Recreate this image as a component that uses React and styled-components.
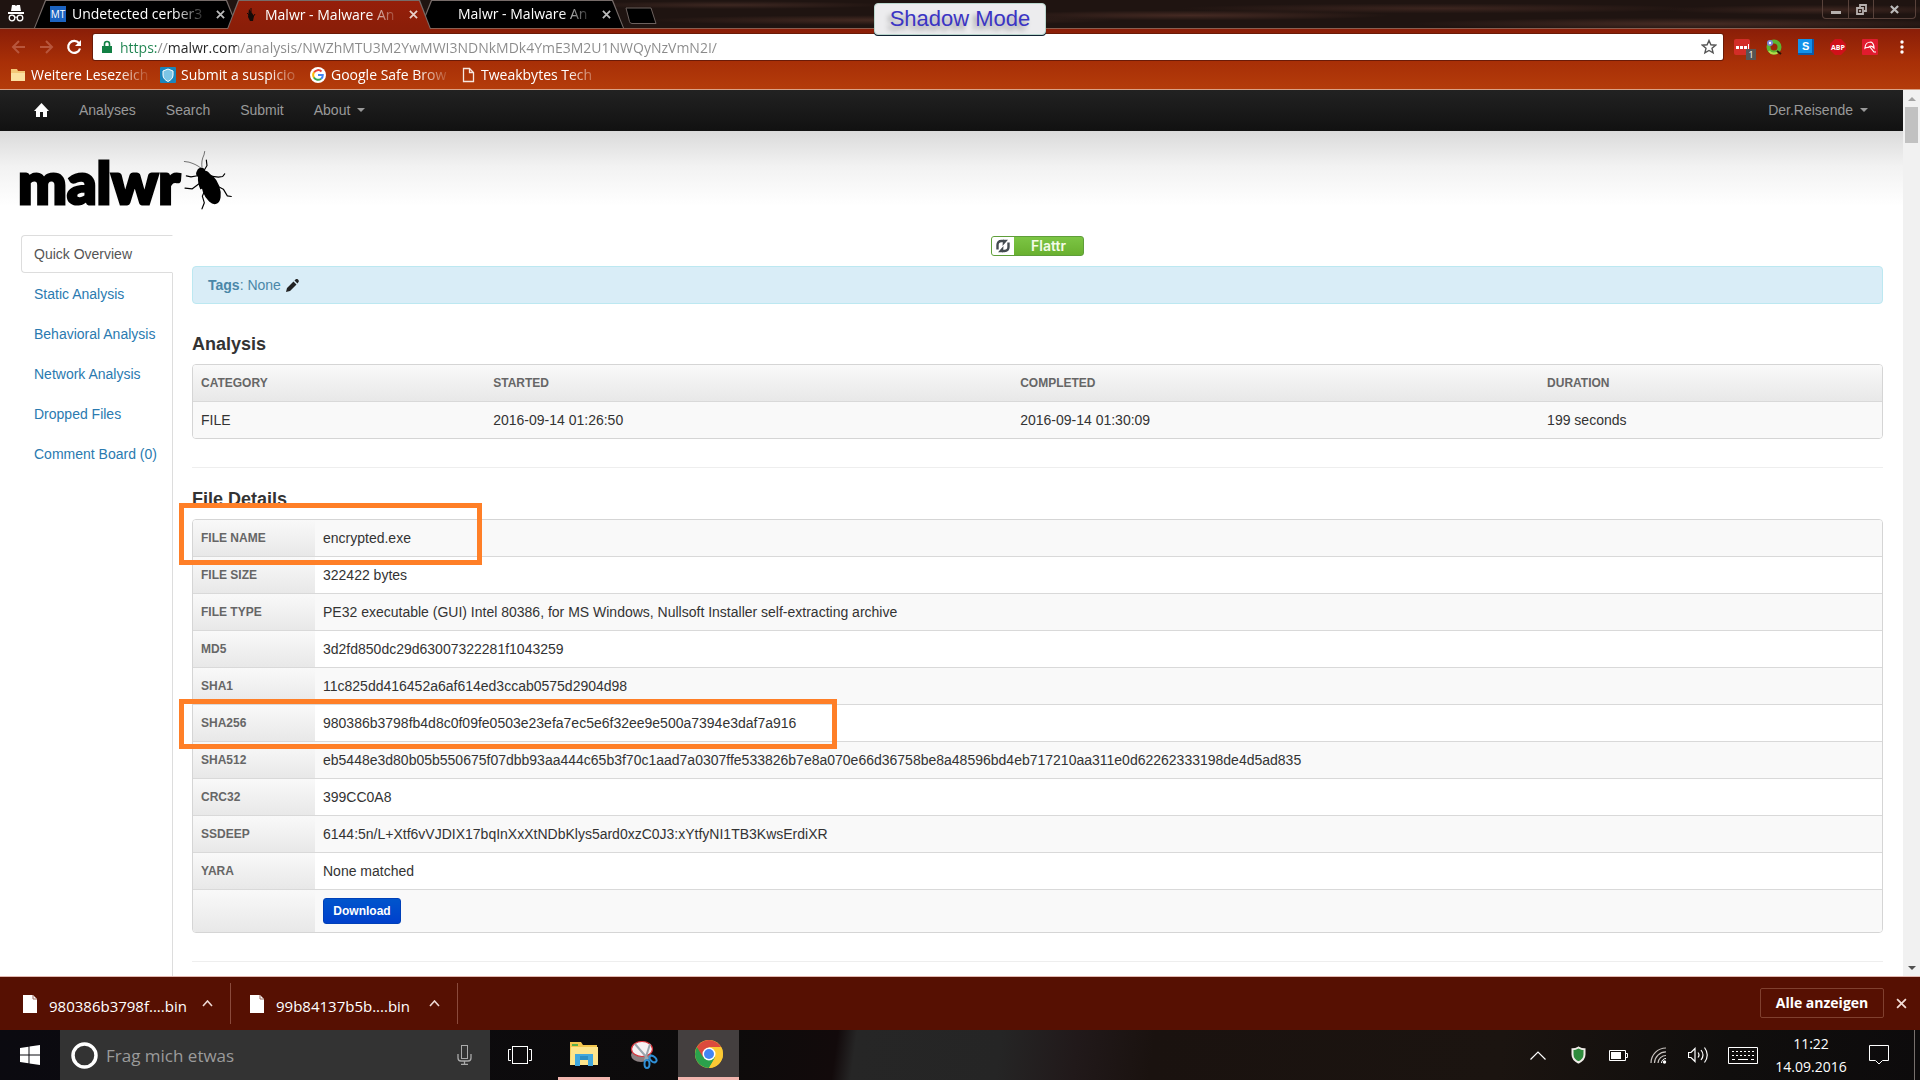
import React from "react";
import styled, { createGlobalStyle, css } from "styled-components";

const uiFont = `"Segoe UI", "Open Sans", "Noto Sans", sans-serif`;
const pageFont = `"Helvetica Neue", Arial, "Liberation Sans", sans-serif`;

const Global = createGlobalStyle`
  *, *::before, *::after { box-sizing: border-box; }
  html, body { margin: 0; height: 100%; overflow: hidden; }
  #root { height: 100%; }
  button, input { font: inherit; }
  a { text-decoration: none; }
`;

const Screen = styled.div`
  height: 100vh;
  display: flex;
  flex-direction: column;
  overflow: hidden;
  font-family: ${uiFont};
  font-size: 14px;
`;

const IconButton = styled.button`
  display: inline-flex;
  align-items: center;
  justify-content: center;
  flex: none;
  width: ${(p) => p.$w || 16}px;
  height: ${(p) => p.$h || 20}px;
  margin-left: ${(p) => p.$ml || 0}px;
  padding: 0;
  border: 0;
  background: none;
  color: ${(p) => p.$color || "#fff"};
  svg { display: block; flex: none; }
`;

/* ---------- window title bar ---------- */

const TitleBar = styled.header`
  position: relative;
  z-index: 1;
  flex: none;
  height: 29px;
  display: flex;
  border-bottom: 1px solid #8c5f50;
  background:
    radial-gradient(ellipse 160px 4px at 38% 18%, #3d2721 0, transparent 100%),
    radial-gradient(ellipse 240px 5px at 46% 72%, #442a22 0, transparent 100%),
    radial-gradient(ellipse 200px 5px at 62% 55%, #452a23 0, transparent 100%),
    radial-gradient(ellipse 260px 5px at 75% 30%, #3c251f 0, transparent 100%),
    radial-gradient(ellipse 280px 6px at 88% 85%, #472c24 0, transparent 100%),
    radial-gradient(ellipse 160px 5px at 95% 35%, #3d2620 0, transparent 100%),
    #1f1411;
`;

const Incognito = styled.div`
  width: 34px;
  padding: 4px 0 0 8px;
`;

const TabStrip = styled.div`
  display: flex;
  height: 29px;
`;

const slant = "polygon(11px 0, calc(100% - 11px) 0, 100% 100%, 0 100%)";

const Tab = styled.button`
  position: relative;
  z-index: ${(p) => (p.$active ? 2 : 1)};
  display: flex;
  align-items: center;
  width: 204px;
  height: ${(p) => (p.$active ? 29 : 28)}px;
  margin-right: -11px;
  padding: 0 0 0 16px;
  border: 0;
  background: #776c69;
  clip-path: ${slant};
  color: #fff;
  text-align: left;
  &::before {
    content: "";
    position: absolute;
    inset: 1px 1px 0;
    background: ${(p) => (p.$active ? "linear-gradient(#951f0a, #8a1e08)" : "#000")};
    clip-path: ${slant};
  }
`;

const Favicon = styled.span`
  position: relative;
  display: flex;
  flex: none;
  width: 22px;
  height: 20px;
  align-items: center;
`;

const MtBadge = styled.span`
  width: 16px;
  height: 16px;
  background: #1b63c0;
  font-size: 10px;
  line-height: 16px;
  text-align: center;
`;

const fade = css`
  overflow: hidden;
  white-space: nowrap;
  mask-image: linear-gradient(to right, #000 calc(100% - 34px), transparent);
`;

const TabTitle = styled.span`
  position: relative;
  width: 136px;
  line-height: 20px;
  ${fade}
`;

const TabClose = styled.span`
  position: relative;
  width: 14px;
  height: 20px;
  margin-left: 8px;
  display: flex;
  align-items: center;
`;

const NewTab = styled.button`
  width: 32px;
  height: 18px;
  margin: 7px 0 0 12px;
  padding: 0;
  border: 0;
  background: none;
  svg { display: block; }
`;

const WindowControls = styled.div`
  display: flex;
  height: 19px;
  margin: 0 4px 0 auto;
  border: 1px solid #58423b;
  border-top: 0;
  border-radius: 0 0 4px 4px;
`;

const WindowButton = styled.button`
  width: ${(p) => p.$w}px;
  padding: 0;
  border: 0;
  border-left: ${(p) => (p.$first ? "0" : "1px solid #58423b")};
  background: none;
  color: #b5b0ae;
  display: flex;
  align-items: center;
  justify-content: center;
`;

const ShadowBadge = styled.div`
  position: absolute;
  z-index: 3;
  left: 50%;
  top: 3px;
  width: 172px;
  height: 32px;
  transform: translateX(-50%);
  border: 1px solid #b9d6cd;
  border-radius: 4px;
  background: #ececee;
  box-shadow: 0 1px 0 #123;
  color: #3b35c4;
  font-family: ${pageFont};
  font-size: 22px;
  line-height: 30px;
  text-align: center;
  text-shadow: -3px 4px 5px #999;
`;

/* ---------- toolbar and bookmarks ---------- */

const Chrome = styled.div`
  flex: none;
  display: flex;
  flex-direction: column;
  height: 61px;
  padding-top: 5px;
  border-bottom: 1px solid #d9a287;
  background: linear-gradient(#8a1e08, #a82f07 55%, #b43c0a);
`;

const Toolbar = styled.div`
  display: flex;
  align-items: center;
  height: 26px;
  padding: 0 10px;
`;

const NavButtons = styled.div`
  display: flex;
  width: 83px;
  gap: 12px;
`;

const Omnibox = styled.label`
  flex: 1;
  display: flex;
  align-items: center;
  height: 26px;
  padding: 0 6px 0 9px;
  border-radius: 2px;
  background: #fff;
  box-shadow: 0 0 0 1px #6b1b08;
`;

const UrlInput = styled.input`
  flex: 1;
  height: 24px;
  margin-left: 8px;
  padding: 0;
  border: 0;
  outline: 0;
  background: linear-gradient(to right, #1e8450 0 37px, #888 37px 47px, #222 47px 117px, #8a8a8a 117px);
  background-clip: text;
  color: transparent;
`;

const Extensions = styled.div`
  display: flex;
  gap: 16px;
  margin-left: 11px;
`;

const Extension = styled(IconButton)`
  position: relative;
`;

const Counter = styled.span`
  position: absolute;
  left: 12px;
  top: 12px;
  width: 10px;
  height: 11px;
  background: #555;
  color: #fff;
  font-size: 9px;
  line-height: 11px;
`;

const Bookmarks = styled.nav`
  display: flex;
  align-items: center;
  height: 29px;
  padding-left: 10px;
  gap: 8px;
`;

const Bookmark = styled.a`
  display: flex;
  align-items: center;
  width: 142px;
  gap: 5px;
  color: #fff;
  line-height: 20px;
  svg { flex: none; }
  span { flex: 1; ${fade} }
`;

/* ---------- page ---------- */

const Viewport = styled.div`
  flex: 1;
  min-height: 0;
  display: flex;
  background: #fff;
  font-family: ${pageFont};
  font-size: 14px;
  line-height: 20px;
  color: #333;
`;

const Page = styled.div`
  flex: 1;
  min-width: 0;
  display: flex;
  flex-direction: column;
`;

const NavBar = styled.nav`
  flex: none;
  display: flex;
  align-items: center;
  height: 41px;
  padding: 0 35px 2px 34px;
  background: linear-gradient(#222, #111);
  gap: 30px;
`;

const NavLink = styled.a`
  display: flex;
  align-items: center;
  color: #999;
  margin-left: ${(p) => (p.$right ? "auto" : 0)};
`;

const Caret = styled.span`
  margin-left: 7px;
  border: 4px solid transparent;
  border-top-color: #999;
  border-bottom: 0;
`;

const Body = styled.div`
  flex: 1;
  min-height: 0;
  overflow: hidden;
  display: flex;
  flex-direction: column;
  background: linear-gradient(#dadada, #f2f2f2 35px, #fff 75px);
`;

const Logo = styled.h1`
  flex: none;
  display: flex;
  height: 104px;
  margin: 0;
  padding: 19px 0 0 18px;
  color: #000;
  font-family: Lato, "Open Sans", sans-serif;
  font-size: 58px;
  font-weight: 900;
  line-height: 64px;
  -webkit-text-stroke: 3px #000;
  svg { margin-left: 3px; }
`;

const Columns = styled.div`
  flex: 1;
  min-height: 0;
  display: flex;
  padding: 0 20px 0 21px;
  gap: 19px;
`;

const SideNav = styled.nav`
  flex: none;
  width: 152px;
  display: flex;
  flex-direction: column;
  gap: 2px;
  border-right: 1px solid #ddd;
`;

const SideLink = styled.a`
  padding: 8px 12px;
  border: 1px solid transparent;
  color: #2a7ab0;
  white-space: nowrap;
  ${(p) => p.$active && css`
    margin-right: -1px;
    border-color: #ddd;
    border-right-color: #fff;
    border-radius: 4px 0 0 4px;
    background: #fff;
    color: #555;
  `}
`;

const Content = styled.main`
  flex: 1;
  min-width: 0;
`;

const FlattrRow = styled.div`
  display: flex;
  justify-content: center;
  height: 31px;
  padding-top: 1px;
`;

const Flattr = styled.button`
  display: flex;
  width: 93px;
  height: 20px;
  padding: 0;
  border: 1px solid #5f9e3a;
  border-radius: 3px;
  overflow: hidden;
  background: linear-gradient(#7cc544, #69b02f);
  color: #f4fbe8;
  font-family: Inter, sans-serif;
  font-size: 14px;
  font-weight: 600;
  line-height: 18px;
  svg { display: block; background: #fff; }
  span { flex: 1; }
`;

const TagsBox = styled.div`
  display: flex;
  align-items: center;
  padding: 8px 15px;
  border: 1px solid #bce8f1;
  border-radius: 4px;
  background: #d9edf7;
  color: #4a87a8;
  svg { margin-left: 5px; }
`;

const Section = styled.section`
  position: relative;
  padding: ${(p) => p.$top}px 0 28px;
  border-bottom: 1px solid #eee;
`;

const Heading = styled.h4`
  margin: 0 0 10px;
  font-size: 18px;
  line-height: 20px;
  font-weight: bold;
`;

const Table = styled.table`
  width: 100%;
  border: 1px solid #d5d5d5;
  border-radius: 4px;
  border-collapse: separate;
  border-spacing: 0;
  overflow: hidden;
  th, td {
    padding: 8px;
    line-height: 20px;
    text-align: left;
    border-top: 1px solid #d9d9d9;
  }
  tr:first-child > th, thead td { border-top: 0; }
  tbody tr:nth-child(odd) td { background: #f9f9f9; }
`;

const DetailTable = styled(Table)`
  tbody tr:first-child td { border-top: 0; }
`;

const Th = styled.th`
  width: ${(p) => p.$w};
  height: 36px;
  background: linear-gradient(#f9f9f9, #e8e8e8);
  color: #666;
  font-size: 12px;
  text-transform: uppercase;
`;

const Download = styled.button`
  display: block;
  width: 78px;
  height: 26px;
  padding: 0;
  border: 1px solid #0040b8;
  border-radius: 3px;
  background: linear-gradient(#0055cc, #0040cc);
  color: #fff;
  font-size: 12px;
  font-weight: bold;
`;

/* highlight frames drawn over the table */
const Marker = styled.div`
  position: absolute;
  left: -13px;
  top: ${(p) => p.$top}px;
  width: ${(p) => p.$w}px;
  height: ${(p) => p.$h}px;
  border: 5px solid #ff7f27;
  pointer-events: none;
`;

const Scrollbar = styled.div`
  flex: none;
  width: 17px;
  display: flex;
  flex-direction: column;
  align-items: center;
  background: #f1f1f1;
`;

const Arrow = styled.span`
  height: 17px;
  display: flex;
  align-items: center;
  &::before {
    content: "";
    border: 4px solid transparent;
    ${(p) => (p.$down ? "border-top-color: #505050; border-bottom: 0;" : "border-bottom-color: #a3a3a3; border-top: 0;")}
  }
`;

const Thumb = styled.div`
  width: 13px;
  height: 36px;
  margin-bottom: auto;
  background: #c1c1c1;
`;

/* ---------- download shelf ---------- */

const Shelf = styled.footer`
  flex: none;
  display: flex;
  align-items: center;
  height: 54px;
  padding-right: 11px;
  border-top: 1px solid #e3b9b2;
  background: #561002;
  color: #fff;
`;

const ShelfItem = styled.button`
  display: flex;
  align-items: center;
  width: ${(p) => p.$w}px;
  height: 41px;
  padding: 0 17px 0 ${(p) => p.$pad}px;
  border: 0;
  border-right: 1px solid #8a4a3c;
  background: none;
  color: #fff;
  font-size: 15px;
  line-height: 20px;
  text-align: left;
  svg { flex: none; }
  span { flex: 1; margin: 4px 0 0 12px; white-space: nowrap; }
`;

const ShowAll = styled.button`
  width: 124px;
  height: 30px;
  margin: 0 9px 2px auto;
  padding: 0;
  border: 1px solid #80402f;
  border-radius: 2px;
  background: none;
  color: #fff;
  font-size: 14px;
  font-weight: 700;
`;

/* ---------- taskbar ---------- */

const Taskbar = styled.footer`
  flex: none;
  display: flex;
  height: 50px;
  background: linear-gradient(98deg, #0b0a10 0, #0d0b0b 38%, #120a0b 43.5%, #262626 44.500%, #252525 52%, #21191a 56%, #1a120f 60%, #1b1410 78%, #100e0d 90%, #0d0b0c);
  color: #fff;
`;

const TaskButton = styled.button`
  display: flex;
  align-items: center;
  justify-content: center;
  width: ${(p) => p.$w}px;
  padding: 0;
  border: 0;
  border-bottom: ${(p) => (p.$running ? "3px solid #f1b5ae" : "0")};
  margin: ${(p) => p.$m || "0"};
  background: ${(p) => (p.$current ? "#443f3f" : "none")};
`;

const SearchBox = styled.label`
  display: flex;
  align-items: center;
  width: 430px;
  padding: 0 18px 0 11px;
  background: #333;
`;

const SearchInput = styled.input`
  flex: 1;
  margin: 0 8px;
  padding: 0;
  border: 0;
  outline: 0;
  background: none;
  font-size: 17px;
  &::placeholder { color: #9b9b9b; opacity: 1; }
`;

const Tray = styled.div`
  display: flex;
  align-items: center;
  margin-left: auto;
  padding-right: 5px;
`;

const Clock = styled.time`
  width: 76px;
  margin: 0 20px 0 5px;
  font-size: 14px;
  line-height: 23px;
  text-align: center;
`;

const ShowDesktop = styled.span`
  align-self: stretch;
  width: 1px;
  margin-left: 25px;
  background: #77706d;
`;

/* ---------- icons ---------- */

const Svg = ({ w, h, box, children }) => (
  <svg width={w} height={h} viewBox={box || `0 0 ${w} ${h}`} fill="none" aria-hidden="true">{children}</svg>
);

const Cross = ({ size = 9, color = "#bbb", width = 2 }) => (
  <Svg w={size} h={size} box="0 0 10 10"><path d="M1 1l8 8M9 1l-8 8" stroke={color} strokeWidth={width} /></Svg>
);

const Beetle = () => (
  <Svg w={50} h={61} box="540 58 150 182">
    <ellipse cx="624" cy="174" rx="26" ry="48" transform="rotate(-20 624 174)" fill="#000" />
    <path d="M584 116c4-6 13-7 19-3l4 7c8 1 14 8 17 14l12 20-44 22c-6-14-8-26-7-38-5-3-7-9-5-14z" fill="#000" />
    <g stroke="#000" strokeWidth="3.500" strokeLinecap="round" strokeLinejoin="round">
      <path d="M594 112c-12-10-24-14-36-18l-14-2M597 110c-2-14 0-26 6-38l2-10" strokeWidth="1.600" />
      <path d="M605 116l7-12-2-16M588 134l-24 4-14-3M592 156l-24 18-22-2M622 136l24 3 13-2 6-8M644 166l17 9 12 20 12 2M604 182l-6 14 6 20-7 18" />
    </g>
  </Svg>
);

const ChromeLogo = () => (
  <Svg w={28} h={28} box="0 0 28 28">
    <circle cx="14" cy="14" r="14" fill="#fcc934" />
    <path d="M14 14L1.9 7A14 14 0 0014 28l6-10.500z" fill="#2ba24c" />
    <path d="M14 7h12.100A14 14 0 0114 28l6-10z" fill="#fcc934" />
    <path d="M1.900 7A14 14 0 0126.100 7H14l-6 10z" fill="#dc4a3d" />
    <circle cx="14" cy="14" r="6.500" fill="#fff" />
    <circle cx="14" cy="14" r="5" fill="#4285f4" />
  </Svg>
);

const FileIcon = () => (
  <Svg w={14} h={18}><path d="M0 0h10l4 4v14H0z" fill="#fff" /><path d="M10 0v4h4" stroke="#9a6b60" /></Svg>
);

const ShelfCaret = () => (
  <Svg w={11} h={7}><path d="M1 6l4.500-5L10 6" stroke="#eed9d4" strokeWidth="1.600" /></Svg>
);

/* ---------- data ---------- */

const sideLinks = ["Quick Overview", "Static Analysis", "Behavioral Analysis", "Network Analysis", "Dropped Files", "Comment Board (0)"];

const details = [
  ["File name", "encrypted.exe"],
  ["File size", "322422 bytes"],
  ["File type", "PE32 executable (GUI) Intel 80386, for MS Windows, Nullsoft Installer self-extracting archive"],
  ["MD5", "3d2fd850dc29d63007322281f1043259"],
  ["SHA1", "11c825dd416452a6af614ed3ccab0575d2904d98"],
  ["SHA256", "980386b3798fb4d8c0f09fe0503e23efa7ec5e6f32ee9e500a7394e3daf7a916"],
  ["SHA512", "eb5448e3d80b05b550675f07dbb93aa444c65b3f70c1aad7a0307ffe533826b7e8a070e66d36758be8a48596bd4eb717210aa311e0d62262333198de4d5ad835"],
  ["CRC32", "399CC0A8"],
  ["Ssdeep", "6144:5n/L+Xtf6vVJDIX17bqInXxXtNDbKlys5ard0xzC0J3:xYtfyNI1TB3KwsErdiXR"],
  ["Yara", "None matched"],
];

function BrowserTop() {
  return (
    <>
      <TitleBar>
        <Incognito>
          <Svg w={16} h={18}>
            <path d="M4 1h3l1 1 1-1h3l1 6H3zM0 8h16v2H0z" fill="#fff" />
            <circle cx="4" cy="14" r="2.800" stroke="#fff" strokeWidth="1.300" />
            <circle cx="12" cy="14" r="2.800" stroke="#fff" strokeWidth="1.300" />
            <path d="M6.500 13.500q1.500-1 3 0" stroke="#fff" />
          </Svg>
        </Incognito>
        <TabStrip>
          <Tab>
            <Favicon><MtBadge>MT</MtBadge></Favicon>
            <TabTitle>Undetected cerber3</TabTitle>
            <TabClose><Cross /></TabClose>
          </Tab>
          <Tab $active>
            <Favicon><Svg w={16} h={16}><path d="M6 2l3 4 2 3-1 5H7l-2-4z" fill="#150b08" /><path d="M8 1v4M4 6l3 3M12 7l-2 3" stroke="#150b08" /></Svg></Favicon>
            <TabTitle>Malwr - Malware An</TabTitle>
            <TabClose><Cross color="#e8cfc8" /></TabClose>
          </Tab>
          <Tab>
            <Favicon />
            <TabTitle>Malwr - Malware An</TabTitle>
            <TabClose><Cross /></TabClose>
          </Tab>
          <NewTab aria-label="New tab">
            <Svg w={32} h={18}><path d="M1 1h25l5 15.500H7q-2 0-2.500-2z" fill="#000" stroke="#6d625f" /></Svg>
          </NewTab>
        </TabStrip>
        <WindowControls>
          <WindowButton $w={25} $first aria-label="Minimize"><Svg w={10} h={10}><path d="M0 7h10v3H0z" fill="currentColor" /></Svg></WindowButton>
          <WindowButton $w={25} aria-label="Restore"><Svg w={11} h={11}><path d="M4 3V1h6v6H8M1 4h6v6H1zM4 6v2" stroke="currentColor" strokeWidth="1.800" /></Svg></WindowButton>
          <WindowButton $w={42} aria-label="Close"><Cross size={9} width={2.4} /></WindowButton>
        </WindowControls>
        <ShadowBadge>Shadow Mode</ShadowBadge>
      </TitleBar>
      <Chrome>
        <Toolbar>
          <NavButtons>
            <IconButton aria-label="Back"><Svg w={15} h={14}><path d="M14 7H2M8 1L2 7l6 6" stroke="#b8563c" strokeWidth="2" /></Svg></IconButton>
            <IconButton aria-label="Forward"><Svg w={15} h={14}><path d="M1 7h12M7 1l6 6-6 6" stroke="#b8563c" strokeWidth="2" /></Svg></IconButton>
            <IconButton aria-label="Reload"><Svg w={16} h={16}><path d="M13 4.200A6 6 0 1014 9.500" stroke="#fff" strokeWidth="2.200" /><path d="M15 1v6H9z" fill="#fff" /></Svg></IconButton>
          </NavButtons>
          <Omnibox>
            <Svg w={10} h={14}><path d="M2.500 7V4a2.500 2.500 0 015 0v3" stroke="#128044" strokeWidth="1.600" /><path d="M0 6h10v7H0z" fill="#128044" /></Svg>
            <UrlInput aria-label="Address" defaultValue="https://malwr.com/analysis/NWZhMTU3M2YwMWI3NDNkMDk4YmE3M2U1NWQyNzVmN2I/" />
            <IconButton aria-label="Bookmark"><Svg w={16} h={16}><path d="M8 1.500l1.900 4.300 4.700.4-3.600 3.100 1.100 4.600L8 11.500l-4.100 2.400L5 9.300 1.400 6.200l4.700-.4z" stroke="#555" strokeWidth="1.400" /></Svg></IconButton>
          </Omnibox>
          <Extensions>
            <Extension aria-label="Password manager"><Svg w={16} h={16}><rect width="16" height="16" rx="2" fill="#d32d27" /><path d="M2 7h3v3H2zM6 7h3v3H6zM10 7h3v3h-3zM14 5h1v6h-1z" fill="#fff" /></Svg><Counter>1</Counter></Extension>
            <Extension aria-label="Search helper"><Svg w={16} h={16}><circle cx="8" cy="8" r="5.500" stroke="#5cb531" strokeWidth="4" /><path d="M3 12a6 6 0 009 1" stroke="#b4dd4a" strokeWidth="2" /><circle cx="4" cy="4" r="3" fill="#7b83d8" /><circle cx="4" cy="4" r="1.200" fill="#fff" /><path d="M11 12l4 3" stroke="#2a1408" strokeWidth="2" /></Svg></Extension>
            <Extension aria-label="Skype"><Svg w={16} h={16}><rect width="16" height="16" fill="#0d5aa8" /><rect width="14" height="14" fill="#1291ea" /><text x="4" y="11" fontFamily="Liberation Sans" fontWeight="700" fontSize="11" fill="#fff">S</text></Svg></Extension>
            <Extension aria-label="Adblock Plus"><Svg w={16} h={16}><path d="M5 0h6l5 5v6l-5 5H5l-5-5V5z" fill="#d0101a" /><text x="8" y="11" textAnchor="middle" fontFamily="Open Sans" fontWeight="700" fontSize="7" fill="#fff">ABP</text></Svg></Extension>
            <Extension aria-label="Avira"><Svg w={16} h={16}><rect width="16" height="16" rx="1" fill="#e11b2e" /><path d="M3 9c0-4 3-6 6-6 2 1 3 3 3 6-2-2-4-2-5-1s-3 0-4 1zM8 8l4 5h2" stroke="#fff" strokeWidth="1.200" /></Svg></Extension>
            <IconButton aria-label="Menu"><Svg w={4} h={14}><circle cx="2" cy="2" r="1.700" fill="#fff" /><circle cx="2" cy="7" r="1.700" fill="#fff" /><circle cx="2" cy="12" r="1.700" fill="#fff" /></Svg></IconButton>
          </Extensions>
        </Toolbar>
        <Bookmarks>
          <Bookmark href="#"><Svg w={16} h={14}><path d="M1 1h6l1 2h7v10H1z" fill="#f3c777" /><path d="M1 5h14v8H1z" fill="#fbe0a0" /></Svg><span>Weitere Lesezeich</span></Bookmark>
          <Bookmark href="#"><Svg w={16} h={16}><rect width="16" height="16" rx="1" fill="#1a86bd" /><path d="M8 2l5 2v4c0 3-2 5-5 6.500C5 13 3 11 3 8V4z" fill="#7cc5e6" stroke="#fff" /></Svg><span>Submit a suspicio</span></Bookmark>
          <Bookmark href="#"><Svg w={16} h={16}><circle cx="8" cy="8" r="8" fill="#fff" /><path d="M4 5.500A4.800 4.800 0 0111.500 4.500" stroke="#ea4335" strokeWidth="2" /><path d="M4 5.300a5 5 0 000 5.400" stroke="#fbbc05" strokeWidth="2" /><path d="M3.900 10.500a4.800 4.800 0 007.200 1.200" stroke="#34a853" strokeWidth="2" /><path d="M8 8h4.800a4.700 4.700 0 01-1.700 3.800" stroke="#4285f4" strokeWidth="2" /></Svg><span>Google Safe Brow</span></Bookmark>
          <Bookmark href="#"><Svg w={16} h={16}><path d="M3.500 1.500h6l4 4v9h-10zM9.500 1.500v4h4" stroke="#f6e6df" strokeWidth="1.300" /></Svg><span>Tweakbytes Tech</span></Bookmark>
        </Bookmarks>
      </Chrome>
    </>
  );
}

function MalwrPage() {
  return (
    <Viewport>
      <Page>
        <NavBar>
          <NavLink href="#" aria-label="Home"><Svg w={15} h={14}><path d="M7.500 0L15 8h-2v6H9V9H6v5H2V8H0z" fill="#fff" /></Svg></NavLink>
          <NavLink href="#">Analyses</NavLink>
          <NavLink href="#">Search</NavLink>
          <NavLink href="#">Submit</NavLink>
          <NavLink href="#">About<Caret /></NavLink>
          <NavLink href="#" $right>Der.Reisende<Caret /></NavLink>
        </NavBar>
        <Body>
          <Logo>malwr<Beetle /></Logo>
          <Columns>
            <SideNav>
              {sideLinks.map((t, i) => <SideLink key={t} href="#" $active={i === 0}>{t}</SideLink>)}
            </SideNav>
            <Content>
              <FlattrRow>
                <Flattr>
                  <Svg w={22} h={18}>
                    <path d="M5.500 12.500V8q0-4 4-4H12M16.500 5.500V10q0 4-4 4H10" stroke="#444b50" strokeWidth="2.400" />
                    <path d="M11 2.800h5L10.500 9zM11 15.200H6L11.500 9z" fill="#444b50" />
                  </Svg>
                  <span>Flattr</span>
                </Flattr>
              </FlattrRow>
              <TagsBox>
                <strong>Tags</strong>: None
                <Svg w={13} h={13}><path d="M0 13l1-4 6.500-6.500 3 3L4 12zM8.500 1.500L10 0q1-.5 2 .5t.8 2L11.500 4.500z" fill="#222" /></Svg>
              </TagsBox>
              <Section $top={30}>
                <Heading>Analysis</Heading>
                <Table>
                  <thead>
                    <tr><Th $w="17.3%">Category</Th><Th $w="31.2%">Started</Th><Th $w="31.2%">Completed</Th><Th>Duration</Th></tr>
                  </thead>
                  <tbody>
                    <tr><td>FILE</td><td>2016-09-14 01:26:50</td><td>2016-09-14 01:30:09</td><td>199 seconds</td></tr>
                  </tbody>
                </Table>
              </Section>
              <Section $top={21}>
                <Heading>File Details</Heading>
                <DetailTable>
                  <tbody>
                    {details.map(([k, v]) => <tr key={k}><Th $w="122px" scope="row">{k}</Th><td>{v}</td></tr>)}
                    <tr><Th $w="122px" /><td><Download>Download</Download></td></tr>
                  </tbody>
                </DetailTable>
                <Marker $top={35} $w={303} $h={62} />
                <Marker $top={231} $w={658} $h={50} />
              </Section>
            </Content>
          </Columns>
        </Body>
      </Page>
      <Scrollbar><Arrow /><Thumb /><Arrow $down /></Scrollbar>
    </Viewport>
  );
}

function Desktop() {
  return (
    <>
      <Shelf>
        <ShelfItem $w={231} $pad={23}><FileIcon /><span>980386b3798f....bin</span><ShelfCaret /></ShelfItem>
        <ShelfItem $w={227} $pad={19}><FileIcon /><span>99b84137b5b....bin</span><ShelfCaret /></ShelfItem>
        <ShowAll>Alle anzeigen</ShowAll>
        <IconButton aria-label="Close"><Cross size={11} color="#f3dcd6" width={1.6} /></IconButton>
      </Shelf>
      <Taskbar>
        <TaskButton $w={60} aria-label="Start"><Svg w={20} h={20}><path d="M0 3l8.500-1.200v7.700H0zM9.500 1.600L20 0v9.500H9.500zM0 10.500h8.500v7.700L0 17zM9.500 10.500H20V20L9.500 18.400z" fill="#fff" /></Svg></TaskButton>
        <SearchBox>
          <Svg w={27} h={27}><circle cx="13.500" cy="13.500" r="11.500" stroke="#fff" strokeWidth="3.500" /></Svg>
          <SearchInput aria-label="Suche" placeholder="Frag mich etwas" />
          <Svg w={15} h={20}><rect x="4.500" y=".5" width="6" height="13" stroke="#aaa" /><path d="M1 9v4q0 3 3 3h7q3 0 3-3V9M7.500 16v3M4 19.500h7" stroke="#aaa" strokeWidth="1.300" /></Svg>
        </SearchBox>
        <TaskButton $w={60} aria-label="Task view"><Svg w={24} h={18}><rect x="4.500" y=".5" width="15" height="17" stroke="#fff" /><path d="M3 3.500H.5v11H3M21 3.500h2.500v11H21" stroke="#fff" /></Svg></TaskButton>
        <TaskButton $w={52} $running $m="0 0 0 8px" aria-label="Explorer">
          <Svg w={28} h={24}><path d="M0 0h11l2 3h14v20H0z" fill="#f3c64e" /><path d="M1 5h27v18H0z" fill="#fde58c" /><path d="M2 2h6v2H2z" fill="#5ab04c" /><path d="M5 12h18v12h-5v-6h-8v6H5z" fill="#41a8de" /><path d="M10 14h8v4h-8z" fill="#2d8fc4" /></Svg>
        </TaskButton>
        <TaskButton $w={52} $m="0 8px" aria-label="Snipping Tool">
          <Svg w={28} h={28}>
            <ellipse cx="11" cy="14" rx="10" ry="7" fill="#8c8183" /><ellipse cx="12" cy="8" rx="10.500" ry="7.500" fill="#f6f2f4" stroke="#d8343c" strokeWidth="1.200" />
            <path d="M5 3l13 15M20 3l-5 16" stroke="#9aa5ad" strokeWidth="2" />
            <ellipse cx="23" cy="18" rx="4" ry="2.500" transform="rotate(40 23 18)" stroke="#2f8fd6" strokeWidth="2" /><ellipse cx="17" cy="23" rx="2.500" ry="4" stroke="#2f8fd6" strokeWidth="2" />
          </Svg>
        </TaskButton>
        <TaskButton $w={61} $running $current aria-label="Chrome"><ChromeLogo /></TaskButton>
        <Tray>
          <IconButton $w={20} aria-label="More"><Svg w={16} h={9}><path d="M.500 8.500L8 1l7.500 7.500" stroke="#fff" strokeWidth="1.200" /></Svg></IconButton>
          <IconButton $w={60} aria-label="Security"><Svg w={15} h={18}><path d="M7.500 1.500q3 1.800 6 1.800v5.200q0 5-6 8-6-3-6-8V3.300q3 0 6-1.800z" fill="#2e8b3c" stroke="#f0ece8" strokeWidth="2" /></Svg></IconButton>
          <IconButton $w={20} aria-label="Battery"><Svg w={19} h={11}><path d="M.500.500h16v10H.500zM17 3.500h1.500v4H17" stroke="#fff" /><path d="M2 2h10v7H2z" fill="#fff" /></Svg></IconButton>
          <IconButton $w={60} aria-label="Network"><Svg w={17} h={17}><path d="M1 16A15 15 0 0116 1M4.500 16A11.500 11.500 0 0116 4.800M8 16a8 8 0 018-7.500" stroke="#c9c4c1" strokeWidth="1.200" /><path d="M11.500 16a4.500 4.500 0 014.500-4.500" stroke="#fff" /><circle cx="14.500" cy="15" r="1.700" fill="#fff" /></Svg></IconButton>
          <IconButton $w={20} aria-label="Volume"><Svg w={21} h={18}><path d="M.500 6.500H3L7 2.500v13l-4-4H.500zM10 6.500q2 2.500 0 5M13 4q4 5 0 10M16.500 1.500q5.500 7.500 0 15" stroke="#fff" strokeWidth="1.200" /></Svg></IconButton>
          <IconButton $w={50} $ml={10} aria-label="Keyboard"><Svg w={30} h={17}><path d="M.500.500h29v16H.500z" stroke="#fff" /><path d="M4 4.500h22M4 8.500h22" stroke="#fff" strokeDasharray="2 2" /><path d="M4 12.500h3M10 12.500h10M23 12.500h3" stroke="#fff" /></Svg></IconButton>
          <Clock>11:22<br />14.09.2016</Clock>
          <IconButton $w={20} aria-label="Notifications"><Svg w={20} h={20}><path d="M.500.500h19v15h-6L10 19l-3.500-3.500h-6z" stroke="#fff" /></Svg></IconButton>
          <ShowDesktop />
        </Tray>
      </Taskbar>
    </>
  );
}

export default function App() {
  return (
    <Screen>
      <Global />
      <BrowserTop />
      <MalwrPage />
      <Desktop />
    </Screen>
  );
}
